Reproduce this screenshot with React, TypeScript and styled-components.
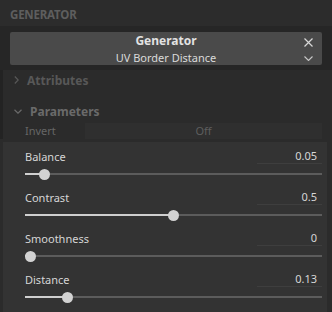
import React from "react";
import styled, { createGlobalStyle } from "styled-components";

const Global = createGlobalStyle`
  html, body { margin: 0; padding: 0; background: #2a2a2a; }
  body { font-family: "Noto Sans", "Open Sans", sans-serif; font-size: 11px; }
`;

const Root = styled.div`
  width: 332px;
  height: 312px;
  overflow: hidden;
  background: #2b2b2b;
  display: flex;
  flex-direction: column;
`;

const Header = styled.div`
  height: 27px;
  display: flex;
  align-items: center;
  padding-left: 10px;
  padding-top: 2px;
  box-sizing: border-box;
  background: #2c2c2c;
  color: #5e5e5e;
  font-weight: 700;
  font-size: 11.5px;
  letter-spacing: -0.2px;
`;

const SelectorArea = styled.div`
  background: #262626;
  padding: 6px 10px 5px 10px;
`;

const SelectorBox = styled.div`
  height: 33px;
  background: #4a4a4a;
  border-radius: 2px;
  position: relative;
  display: flex;
  flex-direction: column;
  align-items: center;
  justify-content: center;
  color: #e2e2e2;
  line-height: 17px;
  padding-top: 1px;
  box-sizing: border-box;
`;

const SelTitle = styled.div`
  font-weight: 700;
  font-size: 12px;
`;

const SelSub = styled.div`
  font-size: 11px;
  color: #dadada;
`;

const IconSlot = styled.div<{ $top: number }>`
  position: absolute;
  right: 9px;
  top: ${(p) => p.$top}px;
  width: 10px;
  height: 10px;
  display: flex;
  align-items: center;
  justify-content: center;
`;

const Section = styled.div<{ $color: string }>`
  height: 18px;
  display: flex;
  align-items: center;
  gap: 8px;
  padding-left: 11px;
  color: ${(p) => p.$color};
  font-weight: 700;
  font-size: 12px;
`;

const Upper = styled.div`
  display: flex;
  flex-direction: column;
  padding-top: 1px;
  border-left: 3px solid #232323;
`;

const Gap = styled.div<{ $h: number }>`
  height: ${(p) => p.$h}px;
`;

const InvertRow = styled.div`
  height: 17px;
  display: flex;
  align-items: center;
  padding-left: 22px;
  color: #666;
  margin-top: 2px;
`;

const InvertLabel = styled.div`
  width: 60px;
`;

const OffButton = styled.div`
  flex: 1;
  height: 16px;
  margin-right: 10px;
  background: #2f2f2f;
  color: #5e5e5e;
  display: flex;
  align-items: center;
  justify-content: center;
`;

const Panel = styled.div`
  flex: 1;
  margin-top: 3px;
  margin-left: 3px;
  margin-right: 5px;
  background: #333333;
  padding: 6px 5px 0 22px;
  display: flex;
  flex-direction: column;
`;

const ParamRow = styled.div`
  height: 41px;
  display: flex;
  flex-direction: column;
`;

const ParamHead = styled.div`
  height: 16px;
  display: flex;
  align-items: center;
  justify-content: space-between;
  color: #d6d6d6;
`;

const ValueField = styled.div`
  width: 65px;
  height: 16px;
  box-sizing: border-box;
  border-bottom: 1px solid #3e3e3e;
  text-align: right;
  padding-right: 5px;
  line-height: 15px;
  color: #d6d6d6;
`;

const Track = styled.div`
  position: relative;
  height: 20px;
  display: flex;
  align-items: center;
`;

const Rail = styled.div`
  width: 100%;
  height: 2px;
  background: #5c5c5c;
  position: relative;
`;

const Fill = styled.div`
  position: absolute;
  left: 0;
  top: 0;
  height: 2px;
  background: #cfcfcf;
`;

const Thumb = styled.div`
  position: absolute;
  top: 50%;
  width: 11px;
  height: 11px;
  margin-left: -5.5px;
  margin-top: -5.5px;
  border-radius: 50%;
  background: #d2d2d2;
`;

const params = [
  { label: "Balance", value: "0.05", v: 0.05 },
  { label: "Contrast", value: "0.5", v: 0.5 },
  { label: "Smoothness", value: "0", v: 0 },
  { label: "Distance", value: "0.13", v: 0.13 },
];

const TRACK_W = 297;
const THUMB = 10;

export default function App() {
  return (
    <Root>
      <Global />
      <Header>GENERATOR</Header>
      <SelectorArea>
        <SelectorBox>
          <SelTitle>Generator</SelTitle>
          <SelSub>UV Border Distance</SelSub>
          <IconSlot $top={5}>
            <svg width="9" height="9" viewBox="0 0 9 9">
              <path d="M0.5 0.5 L8.5 8.5 M8.5 0.5 L0.5 8.5" stroke="#d8d8d8" strokeWidth="1.2" fill="none" />
            </svg>
          </IconSlot>
          <IconSlot $top={21}>
            <svg width="9" height="5" viewBox="0 0 9 5">
              <path d="M0.5 0.5 L4.5 4.5 L8.5 0.5" stroke="#c8c8c8" strokeWidth="1.1" fill="none" />
            </svg>
          </IconSlot>
        </SelectorBox>
      </SelectorArea>
      <Upper>
        <Section $color="#585858">
          <svg width="5" height="8" viewBox="0 0 5 8">
            <path d="M0.8 0.5 L4.2 4 L0.8 7.5" stroke="#585858" strokeWidth="1.2" fill="none" />
          </svg>
          <span>Attributes</span>
        </Section>
        <Gap $h={13} />
        <Section $color="#6a6a6a">
          <svg width="8" height="5" viewBox="0 0 8 5">
            <path d="M0.5 0.8 L4 4.2 L7.5 0.8" stroke="#6a6a6a" strokeWidth="1.2" fill="none" />
          </svg>
          <span>Parameters</span>
        </Section>
        <InvertRow>
          <InvertLabel>Invert</InvertLabel>
          <OffButton>Off</OffButton>
        </InvertRow>
      </Upper>
      <Panel>
        {params.map((p) => {
          const x = THUMB / 2 + p.v * (TRACK_W - THUMB);
          return (
            <ParamRow key={p.label}>
              <ParamHead>
                <span>{p.label}</span>
                <ValueField>{p.value}</ValueField>
              </ParamHead>
              <Track>
                <Rail>
                  <Fill style={{ width: `${x}px` }} />
                  <Thumb style={{ left: `${x}px` }} />
                </Rail>
              </Track>
            </ParamRow>
          );
        })}
      </Panel>
    </Root>
  );
}
